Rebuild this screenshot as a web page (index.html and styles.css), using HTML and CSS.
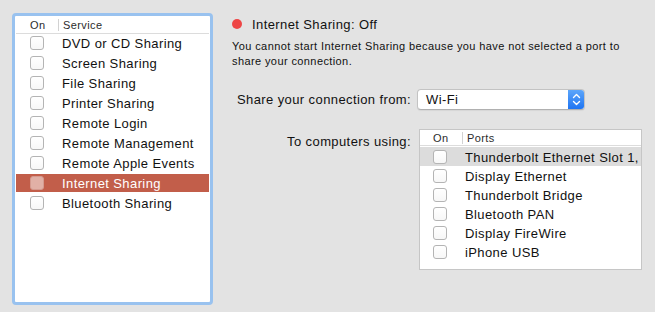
FILE: index.html
```html
<!DOCTYPE html>
<html>
<head>
<meta charset="utf-8">
<link rel="stylesheet" href="styles.css">
</head>
<body>
<div class="pane">
  <div class="services">
    <div class="svc-inner">
      <div class="thead">
        <span class="th-on">On</span>
        <span class="th-div"></span>
        <span class="th-name">Service</span>
      </div>
      <div class="row"><span class="cb"></span><span class="label">DVD or CD Sharing</span></div>
      <div class="row"><span class="cb"></span><span class="label">Screen Sharing</span></div>
      <div class="row"><span class="cb"></span><span class="label">File Sharing</span></div>
      <div class="row"><span class="cb"></span><span class="label">Printer Sharing</span></div>
      <div class="row"><span class="cb"></span><span class="label">Remote Login</span></div>
      <div class="row"><span class="cb"></span><span class="label">Remote Management</span></div>
      <div class="row"><span class="cb"></span><span class="label">Remote Apple Events</span></div>
      <div class="row selected"><span class="cb"></span><span class="label">Internet Sharing</span></div>
      <div class="row"><span class="cb"></span><span class="label">Bluetooth Sharing</span></div>
    </div>
  </div>

  <div class="detail">
    <div class="status"><span class="dot"></span><span class="status-text">Internet Sharing: Off</span></div>
    <p class="desc">You cannot start Internet Sharing because you have not selected a port to<br>share your connection.</p>

    <div class="form">
      <div class="flabel">Share your connection from:</div>
      <div class="popup">
        <span class="popup-value">Wi-Fi</span>
        <span class="stepper">
          <svg width="9" height="13" viewBox="0 0 9 13"><path d="M1.5 4.5 L4.5 1.5 L7.5 4.5 M1.5 8.5 L4.5 11.5 L7.5 8.5" fill="none" stroke="#fff" stroke-width="1.4" stroke-linecap="round" stroke-linejoin="round"/></svg>
        </span>
      </div>

      <div class="flabel flabel-top">To computers using:</div>
      <div class="ports">
        <div class="pthead">
          <span class="pth-on">On</span>
          <span class="th-div"></span>
          <span class="pth-name">Ports</span>
        </div>
        <div class="prow hl"><span class="cb"></span><span class="plabel">Thunderbolt Ethernet Slot 1,</span></div>
        <div class="prow"><span class="cb"></span><span class="plabel">Display Ethernet</span></div>
        <div class="prow"><span class="cb"></span><span class="plabel">Thunderbolt Bridge</span></div>
        <div class="prow"><span class="cb"></span><span class="plabel">Bluetooth PAN</span></div>
        <div class="prow"><span class="cb"></span><span class="plabel">Display FireWire</span></div>
        <div class="prow"><span class="cb"></span><span class="plabel">iPhone USB</span></div>
      </div>
    </div>
  </div>
</div>
</body>
</html>
```

FILE: styles.css
```css
html, body {
  margin: 0;
  padding: 0;
  background: #e3e3e3;
  width: 655px;
  height: 312px;
  overflow: hidden;
  font-family: "Liberation Sans", Arial, sans-serif;
  color: #111;
  letter-spacing: 0.4px;
}

.pane {
  display: flex;
  align-items: flex-start;
}

/* ---------- services list ---------- */
.services {
  margin: 13px 0 0 12px;
  width: 201px;
  height: 292px;
  box-sizing: border-box;
  border: 3px solid #99c2ef;
  border-radius: 4px;
  background: #fff;
  padding: 1px;
}

.svc-inner {
  height: 100%;
  background: #fff;
}

.thead {
  display: flex;
  align-items: center;
  height: 16px;
  border-bottom: 1px solid #dcdcdc;
  font-size: 11px;
  color: #2c2c2c;
}

.th-on {
  margin-left: 14px;
  width: 28px;
}

.th-div {
  width: 1px;
  height: 12px;
  background: #d2d2d2;
}

.th-name {
  margin-left: 4px;
}

.row {
  display: flex;
  align-items: center;
  height: 18px;
  margin-bottom: 2px;
  padding-left: 14px;
  font-size: 13px;
}

.row .label {
  margin-left: 18px;
  white-space: nowrap;
}

.cb {
  flex: none;
  width: 12px;
  height: 12px;
  border: 1px solid #b4b4b4;
  border-radius: 3px;
  background: linear-gradient(#ffffff, #f7f7f7);
}

.row.selected {
  background: #c25e4a;
  color: #fff;
}

.row.selected .cb {
  background: #e1b0a6;
  border-color: #d49a8f;
}

/* ---------- detail ---------- */
.detail {
  margin: 14px 0 0 19px;
  flex: 1;
}

.status {
  display: flex;
  align-items: center;
  height: 20px;
}

.dot {
  width: 10px;
  height: 10px;
  border-radius: 50%;
  background: #ee4646;
}

.status-text {
  margin-left: 10px;
  font-size: 13px;
}

.desc {
  margin: 5px 0 0 0;
  font-size: 11px;
  line-height: 15px;
}

.form {
  margin: 20px 0 0 5px;
  display: grid;
  grid-template-columns: 174px auto;
  column-gap: 6px;
  row-gap: 19px;
  align-items: center;
}

.flabel {
  text-align: right;
  font-size: 13px;
  white-space: nowrap;
}

.flabel-top {
  align-self: start;
  margin-top: 5px;
}

.popup {
  width: 168px;
  height: 21px;
  box-sizing: border-box;
  display: flex;
  align-items: center;
  background: #fff;
  border: 1px solid #c3c3c3;
  border-bottom-color: #b0b0b0;
  border-radius: 4px;
  box-shadow: 0 1px 1px rgba(0,0,0,0.06);
  overflow: hidden;
}

.popup-value {
  flex: 1;
  padding-left: 8px;
  font-size: 13px;
}

.stepper {
  width: 17px;
  height: 21px;
  margin: -1px -1px -1px 0;
  display: flex;
  align-items: center;
  justify-content: center;
  background: linear-gradient(#5fa8fb, #1c72f2);
  border-radius: 0 4px 4px 0;
}

.ports {
  margin-left: 2px;
  width: 223px;
  height: 141px;
  box-sizing: border-box;
  background: #fff;
  border: 1px solid #c6c6c6;
  overflow: hidden;
}

.pthead {
  display: flex;
  align-items: center;
  height: 15px;
  border-bottom: 1px solid #dcdcdc;
  font-size: 11px;
  color: #2c2c2c;
  margin-bottom: 1px;
}

.pth-on {
  margin-left: 13px;
  width: 29px;
}

.pth-name {
  margin-left: 4px;
}

.prow {
  display: flex;
  align-items: center;
  height: 19px;
  padding-left: 13px;
  padding-top: 1px;
  box-sizing: border-box;
  font-size: 13px;
  white-space: nowrap;
}

.prow.hl {
  background: #dcdcdc;
}

.plabel {
  margin-left: 18px;
}
```
